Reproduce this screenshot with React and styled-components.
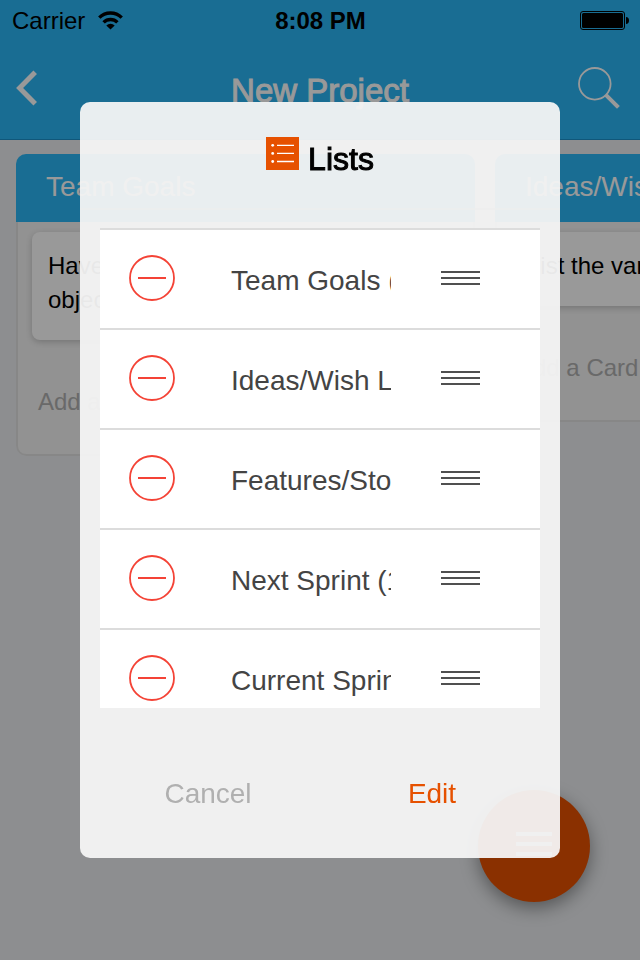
import styled, { createGlobalStyle } from "styled-components";

const columns = [
    { name: "Team Goals", card: "Have clear team goals and objectives" },
    { name: "Ideas/Wish List", card: "List the various ideas" },
];

const lists = [
    "Team Goals (1)",
    "Ideas/Wish List (1)",
    "Features/Stories (2)",
    "Next Sprint (1)",
    "Current Sprint (4)",
];

const App = () => {
    return (
        <Screen>
            <GlobalStyle/>
            <StatusBar>
                <Carrier>
                    <span>Carrier</span>
                    <WifiIcon/>
                </Carrier>
                <Clock>8:08 PM</Clock>
                <BatteryIcon/>
            </StatusBar>
            <NavBar>
                <IconButton type="button" aria-label="Back">
                    <BackIcon/>
                </IconButton>
                <Title>New Project</Title>
                <IconButton type="button" aria-label="Search">
                    <SearchIcon/>
                </IconButton>
            </NavBar>
            <Board>
                {columns.map(({ name, card }) => (
                    <Column key={ name }>
                        <ColumnName>{ name }</ColumnName>
                        <ColumnBody>
                            <Card>{ card }</Card>
                            <AddCard type="button">Add a Card</AddCard>
                        </ColumnBody>
                    </Column>
                ))}
            </Board>
            <MenuButton type="button" aria-label="Menu">
                <MenuIcon/>
            </MenuButton>
            <Overlay>
                <Dialog role="dialog" aria-labelledby="dialog-title">
                    <DialogHeader>
                        <ListsIcon/>
                        <DialogTitle id="dialog-title">Lists</DialogTitle>
                    </DialogHeader>
                    <List>
                        {lists.map(name => (
                            <Row key={ name }>
                                <RowButton type="button" aria-label={ `Remove ${ name }` }>
                                    <RemoveIcon/>
                                </RowButton>
                                <RowName>{ name }</RowName>
                                <RowButton type="button" aria-label={ `Move ${ name }` }>
                                    <HandleIcon/>
                                </RowButton>
                            </Row>
                        ))}
                    </List>
                    <Actions>
                        <ActionButton type="button" $color="#b0b0b0">Cancel</ActionButton>
                        <ActionButton type="button" $color="#e65100">Edit</ActionButton>
                    </Actions>
                </Dialog>
            </Overlay>
        </Screen>
    )
};

export default App;

const WifiIcon = () => (
    <svg width="25" height="19" viewBox="0 0 25 19" fill="none" stroke="#000" strokeWidth="3.4">
        <path d="M1.3 6.6a15.8 15.8 0 0 1 22.4 0"/>
        <path d="M5.6 11.4a9.7 9.7 0 0 1 13.8 0"/>
        <path d="M12.5 18.6l-4.2-4.2a6 6 0 0 1 8.4 0z" fill="#000" stroke="none"/>
    </svg>
);

const BatteryIcon = () => (
    <svg width="49" height="19" viewBox="0 0 49 19">
        <rect x="0.5" y="0.5" width="44" height="18" rx="2.5" fill="none" stroke="#000"/>
        <rect x="2" y="2" width="41" height="15" rx="1.5"/>
        <path d="M46 6c2 0 3 1.5 3 3.5S48 13 46 13z"/>
    </svg>
);

const BackIcon = () => (
    <svg width="22" height="36" viewBox="0 0 22 36" fill="none" stroke="#fff" strokeWidth="5">
        <path d="M19.2 2.2L3.6 18l15.6 15.8"/>
    </svg>
);

const SearchIcon = () => (
    <svg width="42" height="42" viewBox="0 0 42 42" fill="none" stroke="#fff">
        <circle cx="16.8" cy="16.8" r="15.8" strokeWidth="1.8"/>
        <path d="M27.8 27.8L40.4 40.4" strokeWidth="4"/>
    </svg>
);

const MenuIcon = () => (
    <svg width="36" height="24" viewBox="0 0 36 24" fill="#fff">
        <path d="M0 0h36v4H0zM0 10h36v4H0zM0 20h36v4H0z"/>
    </svg>
);

const ListsIcon = () => (
    <svg width="33" height="33" viewBox="0 0 33 33">
        <rect width="33" height="33" fill="#e65100"/>
        <g fill="#fff">
            <circle cx="6.7" cy="8.3" r="1.4"/>
            <circle cx="6.7" cy="16.4" r="1.4"/>
            <circle cx="6.7" cy="24.5" r="1.4"/>
        </g>
        <path d="M11 8.3h17M11 16.4h17M11 24.5h17" stroke="#fff" strokeWidth="1.3"/>
    </svg>
);

const RemoveIcon = () => (
    <svg width="46" height="46" viewBox="0 0 46 46" fill="none" stroke="#f44336">
        <circle cx="23" cy="23" r="22" strokeWidth="1.8"/>
        <path d="M9 23h28" strokeWidth="2"/>
    </svg>
);

const HandleIcon = () => (
    <svg width="39" height="14" viewBox="0 0 39 14" fill="#505050">
        <path d="M0 0h39v2H0zM0 6h39v2H0zM0 12h39v2H0z"/>
    </svg>
);

const GlobalStyle = createGlobalStyle`
    * {
        box-sizing: border-box;
    }

    body {
        margin: 0;
        font-family: "Liberation Sans", Arial, sans-serif;
    }

    button {
        padding: 0;
        border: none;
        background: none;
        font-family: inherit;
        cursor: pointer;
    }

    svg {
        display: block;
    }
`;

const Screen = styled.div`
    min-height: 100vh;
    overflow: hidden;
    background-color: #ebedf0;
`;

const StatusBar = styled.div`
    display: grid;
    grid-template-columns: 1fr auto 1fr;
    align-items: center;
    height: 41px;
    padding: 0 11px 0 12px;
    background-color: #2ab6f5;
    font-size: 24px;

    > :last-child {
        justify-self: end;
    }
`;

const Carrier = styled.div`
    display: flex;
    align-items: center;
    gap: 13px;
`;

const Clock = styled.time`
    font-weight: bold;
`;

const NavBar = styled.header`
    display: flex;
    align-items: center;
    justify-content: space-between;
    height: 99px;
    padding: 0 20px 5px 16px;
    border-bottom: 1px solid #1b92cc;
    background-color: #2ab6f5;
`;

const IconButton = styled.button`
    display: flex;
    width: 42px;

    &:last-child {
        justify-content: flex-end;
    }
`;

const Title = styled.h1`
    margin: 0;
    padding: 6px 0 0 4px;
    font-size: 33px;
    font-weight: normal;
    color: #fff;
    -webkit-text-stroke: 1px #fff;
`;

const Board = styled.main`
    display: flex;
    align-items: flex-start;
    gap: 20px;
    padding: 14px 16px;
`;

const Column = styled.section`
    flex: 0 0 459px;
    border-radius: 10px;
    overflow: hidden;
`;

const ColumnName = styled.h2`
    height: 68px;
    margin: 0;
    padding-left: 30px;
    background-color: #2ab6f5;
    font-size: 28px;
    font-weight: normal;
    line-height: 66px;
    color: #fff;
`;

const ColumnBody = styled.div`
    padding: 10px 14px 38px;
    border: 2px solid #e2e2e2;
    border-top: none;
    border-radius: 0 0 10px 10px;
    background-color: #f3f3f3;
`;

const Card = styled.div`
    padding: 17px 16px 23px;
    border-radius: 8px;
    background-color: #fff;
    box-shadow: 0 2px 6px rgba(0, 0, 0, 0.2);
    font-size: 24px;
    line-height: 34px;
`;

const AddCard = styled.button`
    display: block;
    margin: 48px 0 0 6px;
    font-size: 24px;
    line-height: 28px;
    color: #b0b0b0;
`;

const MenuButton = styled.button`
    position: fixed;
    right: 50px;
    bottom: 58px;
    display: flex;
    align-items: center;
    justify-content: center;
    width: 112px;
    height: 112px;
    padding-bottom: 4px;
    border-radius: 50%;
    background-color: #e65100;
    box-shadow: 0 6px 18px rgba(0, 0, 0, 0.4);
`;

const Overlay = styled.div`
    position: fixed;
    inset: 0;
    display: flex;
    align-items: center;
    justify-content: center;
    background-color: rgba(0, 0, 0, 0.4);
`;

const Dialog = styled.div`
    width: 75%;
    border-radius: 10px;
    background-color: rgba(244, 244, 244, 0.95);
`;

const DialogHeader = styled.header`
    display: flex;
    align-items: flex-start;
    justify-content: center;
    gap: 9px;
    height: 108px;
    padding-top: 35px;
    border-bottom: 2px solid rgba(238, 238, 238, 0.7);
`;

const DialogTitle = styled.h2`
    margin: 0;
    padding-top: 5px;
    font-size: 32px;
    font-weight: normal;
    line-height: 34px;
    -webkit-text-stroke: 1px #000;
`;

const List = styled.ul`
    height: 480px;
    margin: 18px 20px 0;
    padding: 0;
    overflow-y: auto;
    scrollbar-width: none;
    background-color: #fff;
    list-style: none;
`;

const Row = styled.li`
    display: flex;
    align-items: center;
    height: 100px;
    padding: 0 60px 2px 29px;
    border-top: 2px solid #dcdcdc;
`;

const RowButton = styled.button`
    flex: none;
`;

const RowName = styled.span`
    flex: 1;
    margin: 0 50px 0 56px;
    padding-top: 6px;
    overflow: hidden;
    font-size: 28px;
    line-height: 36px;
    white-space: nowrap;
    color: #444;
`;

const Actions = styled.footer`
    display: grid;
    grid-template-columns: 1fr 1fr;
    padding: 50px 16px 28px;
`;

const ActionButton = styled.button`
    height: 72px;
    font-size: 28px;
    color: ${ props => props.$color };
`;
